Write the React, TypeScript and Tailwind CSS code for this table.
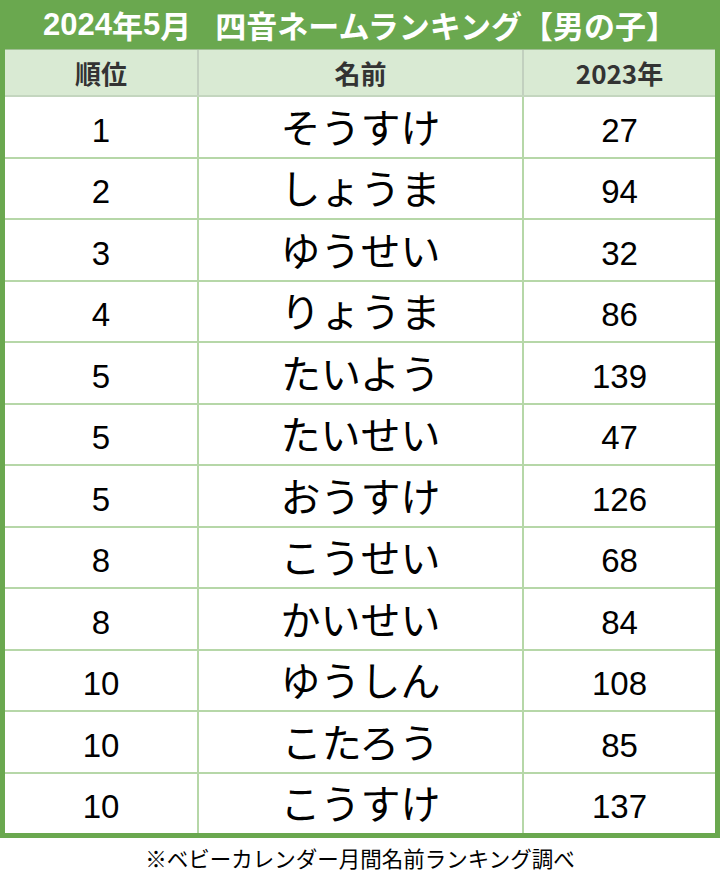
const rows: [string, string, string][] = [
  ['1', 'そうすけ', '27'],
  ['2', 'しょうま', '94'],
  ['3', 'ゆうせい', '32'],
  ['4', 'りょうま', '86'],
  ['5', 'たいよう', '139'],
  ['5', 'たいせい', '47'],
  ['5', 'おうすけ', '126'],
  ['8', 'こうせい', '68'],
  ['8', 'かいせい', '84'],
  ['10', 'ゆうしん', '108'],
  ['10', 'こたろう', '85'],
  ['10', 'こうすけ', '137'],
]

const jp = "font-['Noto_Sans_CJK_JP',sans-serif]"
const num = "font-['Liberation_Sans','Noto_Sans_CJK_JP',sans-serif]"

export default function App() {
  return (
    <div className={`w-[720px] h-[879px] bg-white flex flex-col ${jp}`}>
      <div className="h-[838px] flex flex-col border-x-[5px] border-b-[5px] border-[#6aa84f]">
        <div className="h-[49px] shrink-0 bg-[#6aa84f] flex items-center justify-center text-white font-bold text-[31px] leading-none">
          <span className={num}>2024</span>
          <span>年</span>
          <span className={num}>5</span>
          <span>月</span>
          <span className="ml-[24px]">四音ネームランキング【男の子】</span>
        </div>

        <div className="h-[48px] shrink-0 flex bg-[#d9ead3] border-t border-b-2 border-t-[#9fbf93] border-b-[#c4d6bf] text-[#333] font-bold text-[26px]">
          <div className="w-[194px] border-r-2 border-[#c2d0bf] flex items-center justify-center">順位</div>
          <div className="w-[325px] border-r-2 border-[#c2d0bf] flex items-center justify-center">名前</div>
          <div className="flex-1 flex items-center justify-center">2023年</div>
        </div>

        <div className="flex-1 flex flex-col">
          {rows.map(([rank, name, prev], i) => (
            <div
              key={i}
              className={`flex-1 flex text-black ${i > 0 ? 'border-t-2 border-[#b6d7a8]' : ''}`}
            >
              <div className={`w-[194px] border-r-2 border-[#b6d7a8] flex items-center justify-center text-[33px] pt-[7px] ${num}`}>
                {rank}
              </div>
              <div className="w-[325px] border-r-2 border-[#b6d7a8] flex items-center justify-center text-[40px] leading-none pb-[2px]">
                {name}
              </div>
              <div className={`flex-1 flex items-center justify-center text-[33px] pt-[7px] ${num}`}>
                {prev}
              </div>
            </div>
          ))}
        </div>
      </div>

      <div className="flex-1 flex items-center justify-center text-[21.5px] text-black">
        ※ベビーカレンダー月間名前ランキング調べ
      </div>
    </div>
  )
}
